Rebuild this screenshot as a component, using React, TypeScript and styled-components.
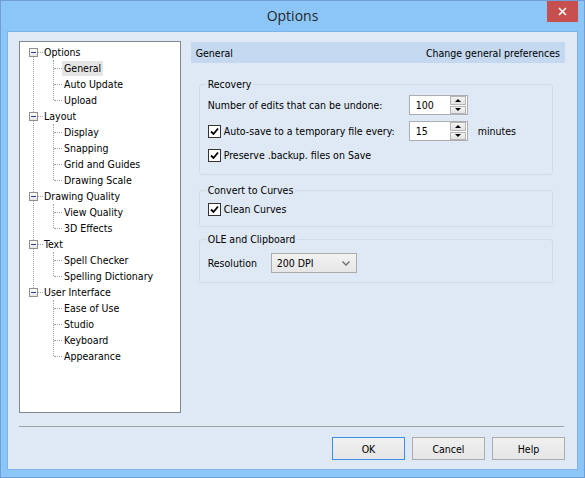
import React from 'react';
import styled, { createGlobalStyle } from 'styled-components';

const GlobalStyle = createGlobalStyle`
  html, body {
    margin: 0;
    padding: 0;
    background: #8cc6f9;
  }
  * {
    box-sizing: border-box;
  }
`;

const UI_FONT = `"DejaVu Sans Condensed", "Liberation Sans", sans-serif`;

const Window = styled.div`
  width: 585px;
  height: 478px;
  border: 1px solid #6f9fd6;
  background: #8cc6f9;
  display: flex;
  flex-direction: column;
  font-family: ${UI_FONT};
  font-size: 10.5px;
  color: #000;
`;

const TitleBar = styled.div`
  height: 30px;
  display: grid;
  grid-template-columns: 1fr auto 1fr;
  align-items: start;
`;

const Title = styled.div`
  grid-column: 2;
  font-family: "Open Sans", "Noto Sans", sans-serif;
  font-size: 14px;
  line-height: 30px;
  color: #262626;
`;

const CloseButton = styled.div`
  grid-column: 3;
  justify-self: end;
  width: 31px;
  height: 21px;
  margin-right: 6px;
  background: #c7504f;
  display: flex;
  align-items: center;
  justify-content: center;
`;

const Client = styled.div`
  flex: 1;
  margin: 0 6px 7px 6px;
  border: 1px solid #7db3e8;
  background: #dfe9f5;
  padding: 9px 12px 0 11px;
  display: flex;
  flex-direction: column;
`;

const Body = styled.div`
  display: flex;
  gap: 10px;
`;

/* ---------- tree ---------- */

const Tree = styled.div`
  width: 162px;
  height: 372px;
  border: 1px solid #828790;
  background: #fff;
  padding-top: 2px;
`;

const Group = styled.div<{ $last?: boolean }>`
  position: relative;
  &::before {
    content: '';
    display: ${(p) => (p.$last ? 'none' : 'block')};
    position: absolute;
    left: 13px;
    top: 8px;
    bottom: -8px;
    border-left: 1px dotted #a0a0a0;
  }
`;

const RootRow = styled.div`
  position: relative;
  height: 16px;
  line-height: 16px;
  padding-left: 24px;
  &::before {
    content: '';
    position: absolute;
    left: 18px;
    top: 8px;
    width: 5px;
    border-top: 1px dotted #a0a0a0;
  }
`;

const ExpandBox = styled.span`
  position: absolute;
  left: 9px;
  top: 4px;
  width: 9px;
  height: 9px;
  border: 1px solid #919191;
  background: linear-gradient(#ffffff, #e6e6e6);
  z-index: 1;
  &::after {
    content: '';
    position: absolute;
    left: 1px;
    top: 3px;
    width: 5px;
    height: 1px;
    background: #1f3f8f;
  }
`;

const Children = styled.div`
  position: relative;
  &::before {
    content: '';
    position: absolute;
    left: 33px;
    top: 0;
    bottom: 8px;
    border-left: 1px dotted #a0a0a0;
  }
`;

const ChildRow = styled.div`
  position: relative;
  height: 16px;
  padding-left: 42px;
  &::before {
    content: '';
    position: absolute;
    left: 34px;
    top: 8px;
    width: 8px;
    border-top: 1px dotted #a0a0a0;
  }
`;

const ItemLabel = styled.span<{ $selected?: boolean }>`
  display: inline-block;
  height: 15px;
  line-height: 15px;
  margin-top: 1px;
  padding: 0 2px;
  background: ${(p) => (p.$selected ? '#e5e5e5' : 'transparent')};
`;

/* ---------- right panel ---------- */

const Panel = styled.div`
  width: 375px;
  margin-top: 1px;
  display: flex;
  flex-direction: column;
`;

const PanelHeader = styled.div`
  height: 21px;
  background: #c4d8f0;
  display: flex;
  align-items: center;
  justify-content: space-between;
  padding: 0 5px;
`;

const GroupBox = styled.fieldset<{ $top: number; $padTop: number; $padBottom: number }>`
  width: 354px;
  margin: ${(p) => p.$top}px 0 0 8px;
  padding: ${(p) => p.$padTop}px 8px ${(p) => p.$padBottom}px 8px;
  border: 1px solid #d2dae3;
  border-radius: 3px;
  min-width: 0;
`;

const Legend = styled.legend`
  padding: 0 2px;
  margin-left: -2px;
  line-height: 14px;
  height: 14px;
`;

const RecoveryGrid = styled.div`
  display: grid;
  grid-template-columns: 191px 59px auto;
  column-gap: 10px;
  align-items: center;
`;

const GridRow = styled.div<{ $gap: number }>`
  display: contents;
  & > * {
    margin-top: ${(p) => p.$gap}px;
  }
`;

const Cell = styled.div<{ $span?: number }>`
  grid-column: span ${(p) => p.$span || 1};
  height: 20px;
  display: flex;
  align-items: center;
  white-space: nowrap;
`;

const CheckRow = styled.label`
  display: flex;
  align-items: center;
  gap: 3px;
  height: 18px;
  white-space: nowrap;
`;

const Box = styled.span`
  width: 13px;
  height: 13px;
  flex: none;
  border: 1px solid #333;
  background: #fff;
  display: flex;
  align-items: center;
  justify-content: center;
`;

const Spinner = styled.div`
  width: 59px;
  height: 20px;
  border: 1px solid #abadb3;
  background: #fff;
  display: flex;
  align-items: center;
  padding: 1px;
`;

const SpinValue = styled.div`
  flex: 1;
  padding-left: 5px;
`;

const SpinButtons = styled.div`
  width: 16px;
  height: 18px;
  display: flex;
  flex-direction: column;
  gap: 1px;
`;

const SpinButton = styled.div`
  flex: 1;
  background: linear-gradient(#f2f2f2, #e3e3e3);
  border: 1px solid #b4b4b4;
  display: flex;
  align-items: center;
  justify-content: center;
`;

const Arrow = styled.span<{ $up?: boolean }>`
  width: 0;
  height: 0;
  border-left: 3px solid transparent;
  border-right: 3px solid transparent;
  ${(p) => (p.$up ? 'border-bottom: 3px solid #000;' : 'border-top: 3px solid #000;')}
`;

const Row = styled.div`
  display: flex;
  align-items: center;
  height: 20px;
`;

const FieldLabel = styled.div`
  width: 63px;
`;

const Select = styled.div`
  width: 86px;
  height: 20px;
  border: 1px solid #acacac;
  background: linear-gradient(#f2f2f2, #e6e6e6);
  display: flex;
  align-items: center;
  justify-content: space-between;
  padding: 0 6px 0 5px;
`;

/* ---------- footer ---------- */

const Separator = styled.div`
  height: 1px;
  background: #a0a0a0;
  margin: 13px 1px 0 0;
`;

const ButtonRow = styled.div`
  display: flex;
  justify-content: flex-end;
  gap: 7px;
  margin-top: 10px;
`;

const Button = styled.div<{ $default?: boolean }>`
  width: 73px;
  height: 23px;
  border: 1px solid ${(p) => (p.$default ? '#3c8ee0' : '#acacac')};
  background: linear-gradient(#f0f0f0, #e5e5e5);
  display: flex;
  align-items: center;
  justify-content: center;
`;

const tree = [
  { label: 'Options', children: ['General', 'Auto Update', 'Upload'] },
  { label: 'Layout', children: ['Display', 'Snapping', 'Grid and Guides', 'Drawing Scale'] },
  { label: 'Drawing Quality', children: ['View Quality', '3D Effects'] },
  { label: 'Text', children: ['Spell Checker', 'Spelling Dictionary'] },
  { label: 'User Interface', children: ['Ease of Use', 'Studio', 'Keyboard', 'Appearance'] },
];

const Check = () => (
  <Box>
    <svg width="9" height="9" viewBox="0 0 9 9">
      <path d="M1 4.5 L3.5 7 L8 1.5" fill="none" stroke="#000" strokeWidth="1.8" />
    </svg>
  </Box>
);

const SpinBox = ({ value }: { value: string }) => (
  <Spinner>
    <SpinValue>{value}</SpinValue>
    <SpinButtons>
      <SpinButton>
        <Arrow $up />
      </SpinButton>
      <SpinButton>
        <Arrow />
      </SpinButton>
    </SpinButtons>
  </Spinner>
);

const App = () => {
  return (
    <>
      <GlobalStyle />
      <Window>
        <TitleBar>
          <Title>Options</Title>
          <CloseButton>
            <svg width="9" height="9" viewBox="0 0 9 9">
              <path d="M1 1 L8 8 M8 1 L1 8" stroke="#fff" strokeWidth="1.6" />
            </svg>
          </CloseButton>
        </TitleBar>
        <Client>
          <Body>
            <Tree>
              {tree.map((node, i) => (
                <Group key={node.label} $last={i === tree.length - 1}>
                  <RootRow>
                    <ExpandBox />
                    {node.label}
                  </RootRow>
                  <Children>
                    {node.children.map((child) => (
                      <ChildRow key={child}>
                        <ItemLabel $selected={child === 'General'}>{child}</ItemLabel>
                      </ChildRow>
                    ))}
                  </Children>
                </Group>
              ))}
            </Tree>
            <Panel>
              <PanelHeader>
                <span>General</span>
                <span>Change general preferences</span>
              </PanelHeader>

              <GroupBox $top={14} $padTop={4} $padBottom={9}>
                <Legend>Recovery</Legend>
                <RecoveryGrid>
                  <GridRow $gap={0}>
                    <Cell>Number of edits that can be undone:</Cell>
                    <Cell>
                      <SpinBox value="100" />
                    </Cell>
                    <Cell />
                  </GridRow>
                  <GridRow $gap={6}>
                    <Cell>
                      <CheckRow>
                        <Check />
                        Auto-save to a temporary file every:
                      </CheckRow>
                    </Cell>
                    <Cell>
                      <SpinBox value="15" />
                    </Cell>
                    <Cell>minutes</Cell>
                  </GridRow>
                  <GridRow $gap={4}>
                    <Cell $span={3}>
                      <CheckRow>
                        <Check />
                        Preserve .backup. files on Save
                      </CheckRow>
                    </Cell>
                  </GridRow>
                </RecoveryGrid>
              </GroupBox>

              <GroupBox $top={8} $padTop={3} $padBottom={8}>
                <Legend>Convert to Curves</Legend>
                <CheckRow>
                  <Check />
                  Clean Curves
                </CheckRow>
              </GroupBox>

              <GroupBox $top={5} $padTop={7} $padBottom={9}>
                <Legend>OLE and Clipboard</Legend>
                <Row>
                  <FieldLabel>Resolution</FieldLabel>
                  <Select>
                    <span>200 DPI</span>
                    <svg width="8" height="5" viewBox="0 0 8 5">
                      <path d="M0.5 0.5 L4 4 L7.5 0.5" fill="none" stroke="#6d6d6d" strokeWidth="1.4" />
                    </svg>
                  </Select>
                </Row>
              </GroupBox>
            </Panel>
          </Body>
          <Separator />
          <ButtonRow>
            <Button $default>OK</Button>
            <Button>Cancel</Button>
            <Button>Help</Button>
          </ButtonRow>
        </Client>
      </Window>
    </>
  );
};

export default App;
